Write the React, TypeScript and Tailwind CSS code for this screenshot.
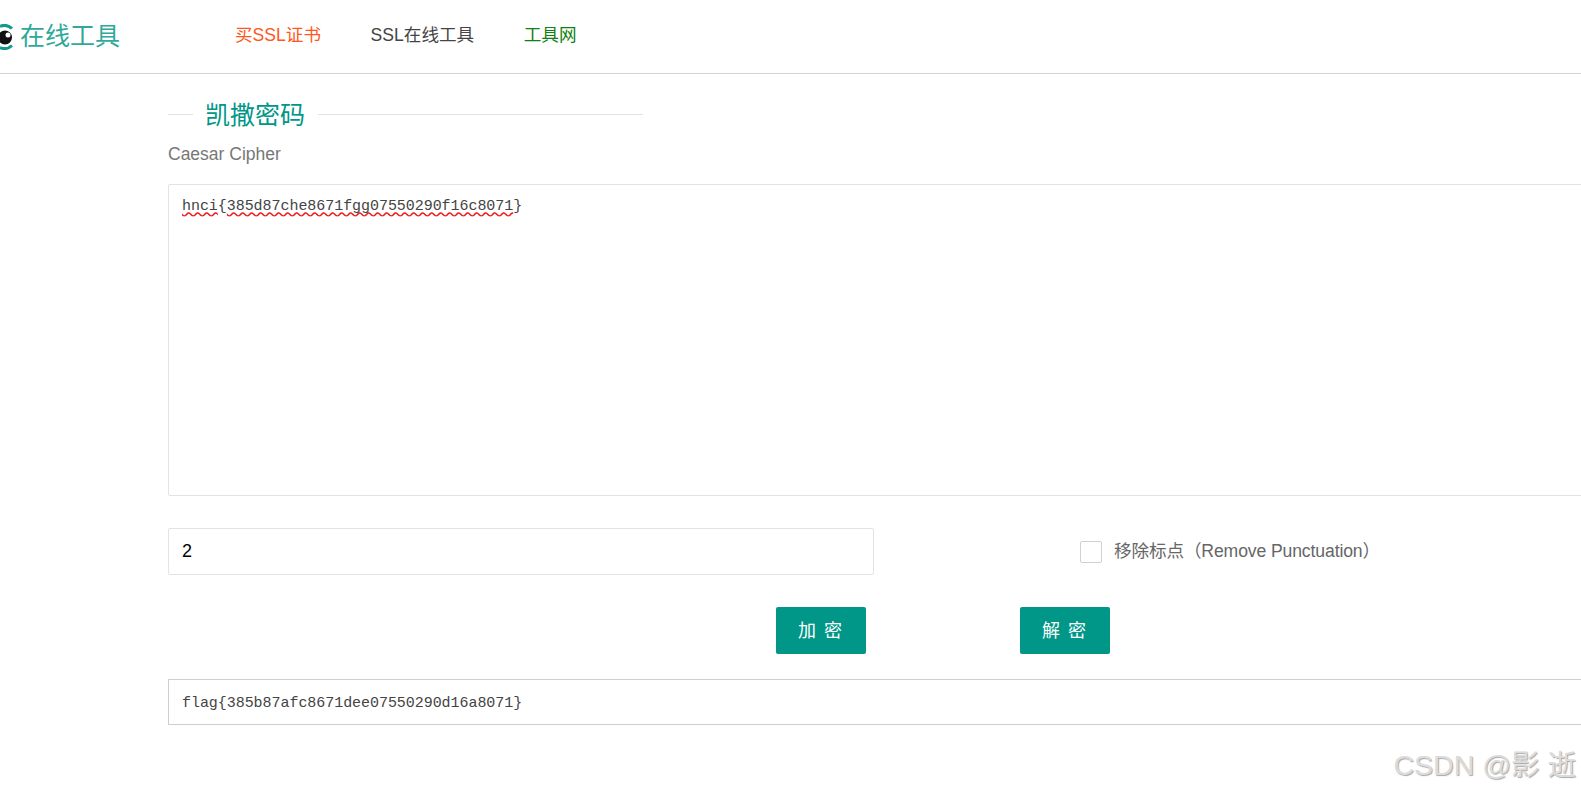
const sans = "font-['Liberation_Sans','Noto_Sans_CJK_SC',sans-serif]";
const mono = "font-['Liberation_Mono','Noto_Sans_CJK_SC',monospace]";
const wavy = "underline decoration-[#f01818] decoration-wavy [text-decoration-skip-ink:none]";

function Logo() {
  return (
    <div className="flex w-[235px] items-center gap-[6px]">
      <svg width="14" height="26" viewBox="0 0 14 26" className="shrink-0">
        <path d="M0 2.5 A11 11 0 0 1 12 4.5" fill="none" stroke="#0f9a8a" strokeWidth="3" />
        <path d="M0 23.5 A11 11 0 0 0 12 21.5" fill="none" stroke="#0f9a8a" strokeWidth="3" />
        <circle cx="5" cy="13.5" r="7" fill="#111" />
        <circle cx="8" cy="11" r="2.5" fill="#fff" />
      </svg>
      <span className="text-[25px] leading-none text-[#2ea99a]">在线工具</span>
    </div>
  );
}

function Header() {
  return (
    <header className="flex h-[74px] items-center border-b border-[#d4d4d4] bg-white">
      <Logo />
      <nav className="-mt-[2px] flex items-center gap-[49.5px] text-[17.6px] leading-none">
        <a className="text-[#ff5722]">买SSL证书</a>
        <a className="text-[#444]">SSL在线工具</a>
        <a className="text-[#0f820f]">工具网</a>
      </nav>
    </header>
  );
}

function Heading() {
  return (
    <div className="flex h-[42px] w-[475px] items-center">
      <span className="h-px w-[25px] bg-[#e2e2e2]" />
      <h1 className="mt-[2px] pl-[12px] pr-[13px] text-[25px] leading-none text-[#009688]">凯撒密码</h1>
      <span className="h-px flex-1 bg-[#e2e2e2]" />
    </div>
  );
}

export default function App() {
  return (
    <div className={`relative h-[793px] overflow-hidden bg-white ${sans}`}>
      <Header />
      <main className="w-[1700px] pl-[168px]">
        <div className="pt-[19px]">
          <Heading />
        </div>
        <p className="mt-[7px] text-[17.5px] leading-[24px] text-[#777]">Caesar Cipher</p>

        <div className={`mt-[18px] h-[312px] rounded-[2px] border border-[#e3e3e3] px-[13px] pt-[12px] text-[15px] leading-[20px] tracking-[-0.05px] text-[#444] ${mono}`}>
          <span className={wavy}>hnci</span>
          {"{"}
          <span className={wavy}>385d87che8671fgg07550290f16c8071</span>
          {"}"}
        </div>

        <div className="mt-[32px] flex items-center">
          <div className="flex h-[47px] w-[706px] items-center rounded-[2px] border border-[#e3e3e3] px-[13px] pb-px text-lg text-black">2</div>
          <span className="ml-[206px] h-[22px] w-[22px] rounded-[2px] border border-[#d0d0d0]" />
          <span className="ml-[12px] text-[17.6px] leading-none tracking-[-0.12px] text-[#666]">移除标点（Remove Punctuation）</span>
        </div>

        <div className="mt-[32px] flex">
          <button className="ml-[608px] h-[47px] w-[90px] rounded-[2px] bg-[#009688] pl-[6px] text-lg tracking-[8px] text-white">加密</button>
          <button className="ml-[154px] h-[47px] w-[90px] rounded-[2px] bg-[#009688] pl-[6px] text-lg tracking-[8px] text-white">解密</button>
        </div>

        <div className={`mt-[25px] flex h-[46px] items-center border border-[#cfcfcf] px-[13px] pt-[4px] text-[15px] tracking-[-0.05px] text-[#444] ${mono}`}>
          flag{"{"}385b87afc8671dee07550290d16a8071{"}"}
        </div>
      </main>
      <span className="absolute right-[5px] top-[751px] text-[28.5px] leading-none text-[#dcdcdc] [text-shadow:1px_1px_1px_#a8a8a8]">CSDN @影 逝</span>
    </div>
  );
}
